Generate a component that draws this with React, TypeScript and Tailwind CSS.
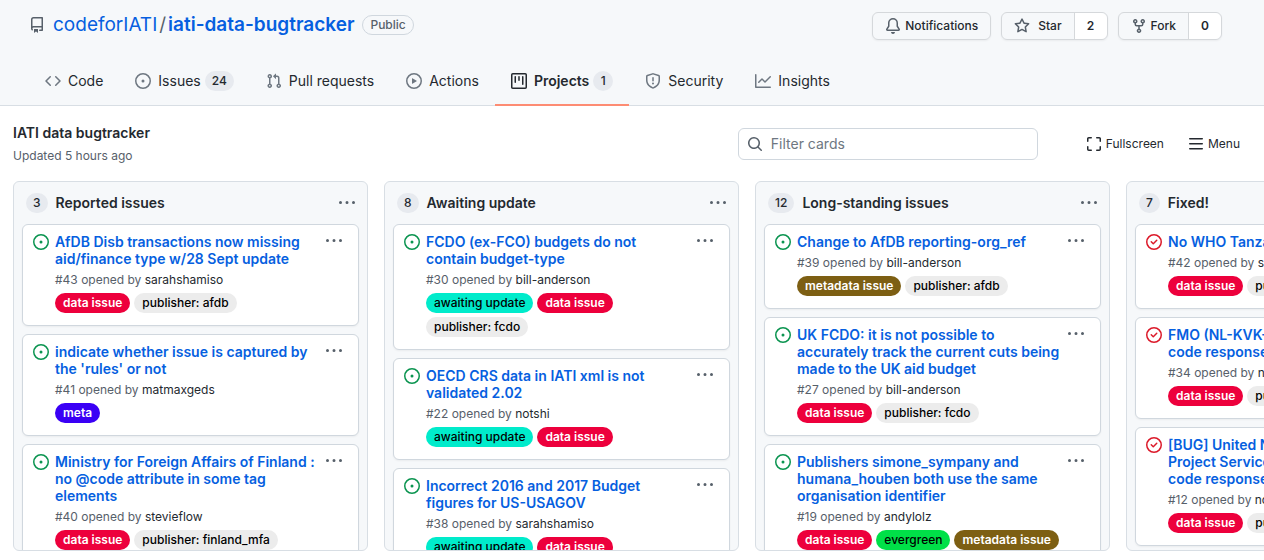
import React from 'react';

const PATHS = {
  repo: 'M2 2.5A2.5 2.5 0 014.5 0h8.75a.75.75 0 01.75.75v12.5a.75.75 0 01-.75.75h-2.5a.75.75 0 110-1.5h1.75v-2h-8a1 1 0 00-.714 1.7.75.75 0 01-1.072 1.05A2.495 2.495 0 012 11.5v-9zm10.5-1V9h-8c-.356 0-.694.074-1 .208V2.5a1 1 0 011-1h8zM5 12.25v3.25a.25.25 0 00.4.2l1.45-1.087a.25.25 0 01.3 0L8.6 15.7a.25.25 0 00.4-.2v-3.25a.25.25 0 00-.25-.25h-3.5a.25.25 0 00-.25.25z',
  code: 'M4.72 3.22a.75.75 0 011.06 1.06L2.06 8l3.72 3.72a.75.75 0 11-1.06 1.06L.47 8.53a.75.75 0 010-1.06l4.25-4.25zm6.56 0a.75.75 0 10-1.06 1.06L13.94 8l-3.72 3.72a.75.75 0 101.06 1.06l4.25-4.25a.75.75 0 000-1.06l-4.25-4.25z',
  issue: 'M8 9.5a1.5 1.5 0 100-3 1.5 1.5 0 000 3zM8 0a8 8 0 100 16A8 8 0 008 0zM1.5 8a6.5 6.5 0 1113 0 6.5 6.5 0 01-13 0z',
  closed: 'M11.28 6.78a.75.75 0 00-1.06-1.06L7.25 8.69 5.78 7.22a.75.75 0 00-1.06 1.06l2 2a.75.75 0 001.06 0l3.5-3.5zM16 8A8 8 0 110 8a8 8 0 0116 0zm-1.5 0a6.5 6.5 0 11-13 0 6.5 6.5 0 0113 0z',
  pull: 'M7.177 3.073L9.573.677A.25.25 0 0110 .854v4.792a.25.25 0 01-.427.177L7.177 3.427a.25.25 0 010-.354zM3.75 2.5a.75.75 0 100 1.5.75.75 0 000-1.5zm-2.25.75a2.25 2.25 0 113 2.122v5.256a2.251 2.251 0 11-1.5 0V5.372A2.25 2.25 0 011.5 3.25zM11 2.5h-1V4h1a1 1 0 011 1v5.628a2.251 2.251 0 101.5 0V5A2.5 2.5 0 0011 2.5zm1 10.25a.75.75 0 111.5 0 .75.75 0 01-1.5 0zM3.75 12a.75.75 0 100 1.5.75.75 0 000-1.5z',
  play: 'M1.5 8a6.5 6.5 0 1113 0 6.5 6.5 0 01-13 0zM8 0a8 8 0 100 16A8 8 0 008 0zM6.379 5.227A.25.25 0 006 5.442v5.117a.25.25 0 00.379.214l4.264-2.559a.25.25 0 000-.428L6.379 5.227z',
  project: 'M1.75 0A1.75 1.75 0 000 1.75v12.5C0 15.216.784 16 1.75 16h12.5A1.75 1.75 0 0016 14.25V1.75A1.75 1.75 0 0014.25 0H1.75zM1.5 1.75a.25.25 0 01.25-.25h12.5a.25.25 0 01.25.25v12.5a.25.25 0 01-.25.25H1.75a.25.25 0 01-.25-.25V1.75zM11.75 3a.75.75 0 00-.75.75v7.5a.75.75 0 001.5 0v-7.5a.75.75 0 00-.75-.75zm-8.25.75a.75.75 0 011.5 0v5.5a.75.75 0 01-1.5 0v-5.5zM8 3a.75.75 0 00-.75.75v3.5a.75.75 0 001.5 0v-3.5A.75.75 0 008 3z',
  shield: 'M7.467.133a1.75 1.75 0 011.066 0l5.25 1.68A1.75 1.75 0 0115 3.48V7c0 1.566-.32 3.182-1.303 4.682-.983 1.498-2.585 2.813-5.032 3.855a1.7 1.7 0 01-1.33 0c-2.447-1.042-4.049-2.357-5.032-3.855C1.32 10.182 1 8.566 1 7V3.48a1.75 1.75 0 011.217-1.667l5.25-1.68zm.61 1.429a.25.25 0 00-.153 0l-5.25 1.68a.25.25 0 00-.174.238V7c0 1.358.275 2.666 1.057 3.86.784 1.194 2.121 2.34 4.366 3.297a.2.2 0 00.154 0c2.245-.956 3.582-2.104 4.366-3.298C13.225 9.666 13.5 8.36 13.5 7V3.48a.25.25 0 00-.174-.237l-5.25-1.68zM9 10.5a1 1 0 11-2 0 1 1 0 012 0zm-.25-5.75a.75.75 0 10-1.5 0v3a.75.75 0 001.5 0v-3z',
  graph: 'M1.5 1.75a.75.75 0 00-1.5 0v12.5c0 .414.336.75.75.75h14.5a.75.75 0 000-1.5H1.5V1.75zm14.28 2.53a.75.75 0 00-1.06-1.06L10 7.94 7.53 5.47a.75.75 0 00-1.06 0L3.22 8.72a.75.75 0 001.06 1.06L7 7.06l2.47 2.47a.75.75 0 001.06 0l5.25-5.25z',
  bell: 'M8 16a2 2 0 001.985-1.75c.017-.137-.097-.25-.235-.25h-3.5c-.138 0-.252.113-.235.25A2 2 0 008 16zM8 1.5A3.5 3.5 0 004.5 5v2.947c0 .346-.102.683-.294.97l-1.703 2.556a.018.018 0 00-.003.01l.001.006c0 .002.002.004.004.006a.017.017 0 00.006.004l.007.001h10.964l.007-.001a.016.016 0 00.006-.004.016.016 0 00.004-.006l.001-.007a.017.017 0 00-.003-.01l-1.703-2.554a1.75 1.75 0 01-.294-.97V5A3.5 3.5 0 008 1.5zM3 5a5 5 0 0110 0v2.947c0 .05.015.098.042.139l1.703 2.555A1.518 1.518 0 0113.482 13H2.518a1.518 1.518 0 01-1.263-2.36l1.703-2.554A.25.25 0 003 7.947V5z',
  star: 'M8 .25a.75.75 0 01.673.418l1.882 3.815 4.21.612a.75.75 0 01.416 1.279l-3.046 2.97.719 4.192a.75.75 0 01-1.088.791L8 12.347l-3.766 1.98a.75.75 0 01-1.088-.79l.72-4.194L.818 6.374a.75.75 0 01.416-1.28l4.21-.611L7.327.668A.75.75 0 018 .25zm0 2.445L6.615 5.5a.75.75 0 01-.564.41l-3.097.45 2.24 2.184a.75.75 0 01.216.664l-.528 3.084 2.769-1.456a.75.75 0 01.698 0l2.77 1.456-.53-3.084a.75.75 0 01.216-.664l2.24-2.183-3.096-.45a.75.75 0 01-.564-.41L8 2.694v.001z',
  fork: 'M5 3.25a.75.75 0 11-1.5 0 .75.75 0 011.5 0zm0 2.122a2.25 2.25 0 10-1.5 0v.878A2.25 2.25 0 005.75 8.5h1.5v2.128a2.251 2.251 0 101.5 0V8.5h1.5a2.25 2.25 0 002.25-2.25v-.878a2.25 2.25 0 10-1.5 0v.878a.75.75 0 01-.75.75h-4.5A.75.75 0 015 6.25v-.878zm3.75 7.378a.75.75 0 11-1.5 0 .75.75 0 011.5 0zm3-8.75a.75.75 0 100-1.5.75.75 0 000 1.5z',
  search: 'M11.5 7a4.499 4.499 0 11-8.998 0A4.499 4.499 0 0111.5 7zm-.82 4.74a6 6 0 111.06-1.06l3.04 3.04a.75.75 0 11-1.06 1.06l-3.04-3.04z',
  full: 'M2.75 2.5a.25.25 0 00-.25.25v2.5a.75.75 0 01-1.5 0v-2.5C1 1.784 1.784 1 2.75 1h2.5a.75.75 0 010 1.5h-2.5zM10 1.75a.75.75 0 01.75-.75h2.5c.966 0 1.75.784 1.75 1.75v2.5a.75.75 0 01-1.5 0v-2.5a.25.25 0 00-.25-.25h-2.5a.75.75 0 01-.75-.75zM1.75 10a.75.75 0 01.75.75v2.5c0 .138.112.25.25.25h2.5a.75.75 0 010 1.5h-2.5A1.75 1.75 0 011 13.25v-2.5a.75.75 0 01.75-.75zm12.5 0a.75.75 0 01.75.75v2.5A1.75 1.75 0 0113.25 15h-2.5a.75.75 0 010-1.5h2.5a.25.25 0 00.25-.25v-2.5a.75.75 0 01.75-.75z',
  bars: 'M1 2.75A.75.75 0 011.75 2h12.5a.75.75 0 110 1.5H1.75A.75.75 0 011 2.75zm0 5A.75.75 0 011.75 7h12.5a.75.75 0 110 1.5H1.75A.75.75 0 011 7.75zM1.75 12a.75.75 0 100 1.5h12.5a.75.75 0 100-1.5H1.75z',
  kebab: 'M8 9a1.5 1.5 0 100-3 1.5 1.5 0 000 3zM1.5 9a1.5 1.5 0 100-3 1.5 1.5 0 000 3zm13 0a1.5 1.5 0 100-3 1.5 1.5 0 000 3z',
};

type IconName = keyof typeof PATHS;

function Icon({ name, className = '' }: { name: IconName; className?: string }) {
  return (
    <svg viewBox="0 0 16 16" fill="currentColor" fillRule="evenodd" aria-hidden="true" className={`size-4 shrink-0 ${className}`}>
      <path d={PATHS[name]} />
    </svg>
  );
}

const LABELS: Record<string, string> = {
  'data issue': 'bg-[#ed003c] text-white font-semibold',
  meta: 'bg-[#3a00f5] text-white font-semibold',
  'awaiting update': 'bg-[#00ebcb] text-black font-medium',
  'metadata issue': 'bg-[#7d5f13] text-white font-semibold',
  evergreen: 'bg-[#00e048] text-black font-medium',
};

type Issue = { title: string; id: number; by: string; labels: string[]; closed?: boolean };
type ColumnData = { name: string; count: number; issues: Issue[] };

const COLUMNS: ColumnData[] = [
  {
    name: 'Reported issues',
    count: 3,
    issues: [
      { title: 'AfDB Disb transactions now missing aid/finance type w/28 Sept update', id: 43, by: 'sarahshamiso', labels: ['data issue', 'publisher: afdb'] },
      { title: "indicate whether issue is captured by the 'rules' or not", id: 41, by: 'matmaxgeds', labels: ['meta'] },
      { title: 'Ministry for Foreign Affairs of Finland : no @code attribute in some tag elements', id: 40, by: 'stevieflow', labels: ['data issue', 'publisher: finland_mfa'] },
    ],
  },
  {
    name: 'Awaiting update',
    count: 8,
    issues: [
      { title: 'FCDO (ex-FCO) budgets do not contain budget-type', id: 30, by: 'bill-anderson', labels: ['awaiting update', 'data issue', 'publisher: fcdo'] },
      { title: 'OECD CRS data in IATI xml is not validated 2.02', id: 22, by: 'notshi', labels: ['awaiting update', 'data issue'] },
      { title: 'Incorrect 2016 and 2017 Budget figures for US-USAGOV', id: 38, by: 'sarahshamiso', labels: ['awaiting update', 'data issue'] },
    ],
  },
  {
    name: 'Long-standing issues',
    count: 12,
    issues: [
      { title: 'Change to AfDB reporting-org_ref', id: 39, by: 'bill-anderson', labels: ['metadata issue', 'publisher: afdb'] },
      { title: 'UK FCDO: it is not possible to accurately track the current cuts being made to the UK aid budget', id: 27, by: 'bill-anderson', labels: ['data issue', 'publisher: fcdo'] },
      { title: 'Publishers simone_sympany and humana_houben both use the same organisation identifier', id: 19, by: 'andylolz', labels: ['data issue', 'evergreen', 'metadata issue'] },
    ],
  },
  {
    name: 'Fixed!',
    count: 7,
    issues: [
      { title: 'No WHO Tanzania data', id: 42, by: 'sarahshamiso', labels: ['data issue', 'publisher: who'], closed: true },
      { title: 'FMO (NL-KVK-27078545) returning code response', id: 34, by: 'notshi', labels: ['data issue', 'publisher: fmo'], closed: true },
      { title: '[BUG] United Nations Office for the Project Services (UNOPS) returning code response', id: 12, by: 'notshi', labels: ['data issue', 'publisher: unops'], closed: true },
    ],
  },
];

function Counter({ value, className = '' }: { value: number; className?: string }) {
  return (
    <span className={`inline-block min-w-5 rounded-full bg-[#e7eaef] px-[7px] text-center text-xs leading-5 font-medium text-[#24292f] ${className}`}>
      {value}
    </span>
  );
}

function Tab({ icon, label, count, active }: { icon: IconName; label: string; count?: number; active?: boolean }) {
  return (
    <a
      href="#"
      aria-current={active ? 'page' : undefined}
      className={`flex items-center border-b-2 px-4 pt-0.5 text-sm text-[#24292f] ${active ? 'border-[#fd8c73] font-semibold' : 'border-transparent'}`}
    >
      <Icon name={icon} className={`mr-[7px] ${active ? '' : 'text-[#6e7781]'}`} />
      {label}
      {count !== undefined && <Counter value={count} className="ml-1" />}
    </a>
  );
}

function SplitButton({ icon, label, count, gap }: { icon: IconName; label: string; count: number; gap: string }) {
  return (
    <div className="flex h-7 rounded-md border border-[#d5d8db] text-xs font-medium text-[#24292f] shadow-xs">
      <button type="button" className={`flex items-center rounded-l-md px-3 ${gap}`}>
        <Icon name={icon} className="text-[#57606a]" />
        {label}
      </button>
      <a href="#" className="flex w-[33px] items-center justify-center rounded-r-md border-l border-[#d5d8db] bg-white font-semibold">
        {count}
      </a>
    </div>
  );
}

function Card({ issue }: { issue: Issue }) {
  return (
    <article className="flex shrink-0 gap-1.5 rounded-md border border-[#d0d7de] bg-white px-2.5 pt-2 pb-3 shadow-xs">
      <Icon name={issue.closed ? 'closed' : 'issue'} className={`mt-px ${issue.closed ? 'text-[#dc1a2a]' : 'text-[#0b9450]'}`} />
      <div className="min-w-0 flex-1 pr-0.5">
        <a href="#" className="block text-sm leading-[17px] font-semibold text-[#065fe0]">
          {issue.title}
        </a>
        <p className="mt-1 text-xs leading-[18px] text-[#57606a]">
          #{issue.id} opened by{' '}
          <a href="#" className="text-[#24292f]">
            {issue.by}
          </a>
        </p>
        <div className="mt-1 flex flex-wrap gap-1">
          {issue.labels.map((label) => (
            <a key={label} href="#" className={`rounded-full px-2 text-xs leading-5 whitespace-nowrap ${LABELS[label] ?? 'bg-[#ececec] font-medium text-black'}`}>
              {label}
            </a>
          ))}
        </div>
      </div>
      <button type="button" aria-label="Card menu" className="mr-1.5 h-4 text-[#57606a]">
        <Icon name="kebab" />
      </button>
    </article>
  );
}

function Column({ column }: { column: ColumnData }) {
  return (
    <section className="flex w-[355px] shrink-0 flex-col overflow-hidden rounded-md border border-[#d8dee4] bg-[#f6f8fa]">
      <header className="flex h-[42px] shrink-0 items-center px-3">
        <Counter value={column.count} />
        <h3 className="ml-2 flex-1 text-sm font-semibold text-[#24292f]">{column.name}</h3>
        <button type="button" aria-label="Column menu" className="text-[#57606a]">
          <Icon name="kebab" />
        </button>
      </header>
      <div className="flex min-h-0 flex-1 flex-col gap-2 overflow-y-auto px-2 [scrollbar-width:none]">
        {column.issues.map((issue) => (
          <Card key={issue.id} issue={issue} />
        ))}
      </div>
    </section>
  );
}

export default function App() {
  return (
    <div className="flex h-screen flex-col bg-white font-['Inter','Liberation_Sans',sans-serif] text-[#24292f]">
      <header className="border-b border-[#d8dee4] bg-[#f6f8fa]">
        <div className="flex items-start justify-between pt-3 pr-[42px] pl-[29px]">
          <div className="flex h-7 items-center pb-0.5">
            <Icon name="repo" className="text-[#57606a]" />
            <h1 className="ml-2 flex items-center text-[19px] text-[#065fe0]">
              <a href="#">codeforIATI</a>
              <span className="mx-0.5 text-[#57606a]">/</span>
              <a href="#" className="font-semibold">
                iati-data-bugtracker
              </a>
            </h1>
            <span className="ml-2 rounded-full border border-[#d0d7de] px-[7px] text-xs leading-[18px] font-medium text-[#57606a]">Public</span>
          </div>
          <div className="flex gap-2.5">
            <button type="button" className="flex h-7 items-center gap-1 rounded-md border border-[#d5d8db] px-3 text-xs font-medium shadow-xs">
              <Icon name="bell" className="text-[#57606a]" />
              Notifications
            </button>
            <SplitButton icon="star" label="Star" count={2} gap="gap-2" />
            <SplitButton icon="fork" label="Fork" count={0} gap="gap-1" />
          </div>
        </div>
        <nav className="mt-4 -mb-px flex h-[50px] pl-[29px]">
          <Tab icon="code" label="Code" />
          <Tab icon="issue" label="Issues" count={24} />
          <Tab icon="pull" label="Pull requests" />
          <Tab icon="play" label="Actions" />
          <Tab icon="project" label="Projects" count={1} active />
          <Tab icon="shield" label="Security" />
          <Tab icon="graph" label="Insights" />
        </nav>
      </header>

      <main className="flex min-h-0 flex-1 flex-col">
        <div className="flex items-start pt-4 pr-6 pb-3.5 pl-[13px]">
          <div className="flex-1">
            <h2 className="text-sm leading-[22px] font-semibold">IATI data bugtracker</h2>
            <p className="mt-px text-xs leading-[22px] text-[#57606a]">Updated 5 hours ago</p>
          </div>
          <label className="mt-1.5 mr-12 flex h-8 w-[300px] items-center gap-2 rounded-md border border-[#d0d7de] px-2">
            <Icon name="search" className="text-[#57606a]" />
            <input type="search" aria-label="Filter cards" placeholder="Filter cards" className="min-w-0 flex-1 bg-transparent text-sm outline-none placeholder:text-[#6e7781]" />
          </label>
          <div className="mt-1.5 flex h-8 items-center gap-6 text-xs">
            <button type="button" className="flex items-center gap-1">
              <Icon name="full" />
              Fullscreen
            </button>
            <button type="button" className="flex items-center gap-1">
              <Icon name="bars" />
              Menu
            </button>
          </div>
        </div>
        <div className="flex min-h-0 flex-1 gap-4 overflow-x-auto pb-[9px] pl-[13px] [scrollbar-width:none]">
          {COLUMNS.map((column) => (
            <Column key={column.name} column={column} />
          ))}
        </div>
      </main>
    </div>
  );
}
